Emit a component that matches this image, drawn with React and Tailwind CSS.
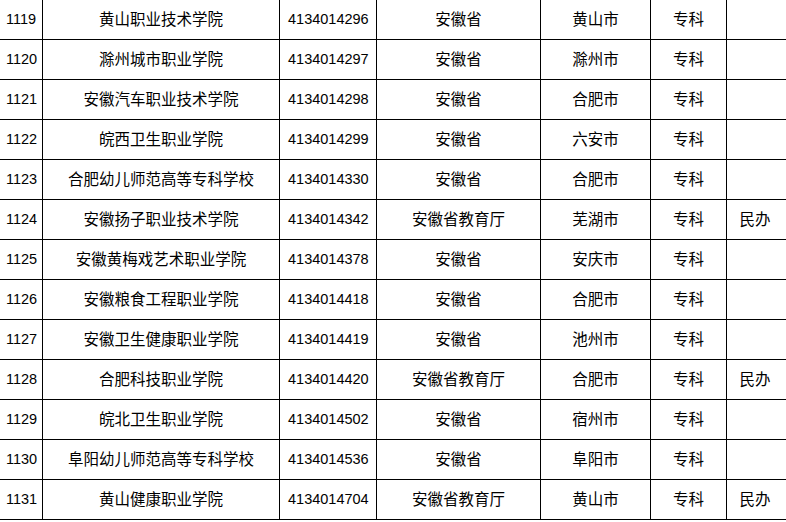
const rows = [
  ['1119', '黄山职业技术学院', '4134014296', '安徽省', '黄山市', '专科', ''],
  ['1120', '滁州城市职业学院', '4134014297', '安徽省', '滁州市', '专科', ''],
  ['1121', '安徽汽车职业技术学院', '4134014298', '安徽省', '合肥市', '专科', ''],
  ['1122', '皖西卫生职业学院', '4134014299', '安徽省', '六安市', '专科', ''],
  ['1123', '合肥幼儿师范高等专科学校', '4134014330', '安徽省', '合肥市', '专科', ''],
  ['1124', '安徽扬子职业技术学院', '4134014342', '安徽省教育厅', '芜湖市', '专科', '民办'],
  ['1125', '安徽黄梅戏艺术职业学院', '4134014378', '安徽省', '安庆市', '专科', ''],
  ['1126', '安徽粮食工程职业学院', '4134014418', '安徽省', '合肥市', '专科', ''],
  ['1127', '安徽卫生健康职业学院', '4134014419', '安徽省', '池州市', '专科', ''],
  ['1128', '合肥科技职业学院', '4134014420', '安徽省教育厅', '合肥市', '专科', '民办'],
  ['1129', '皖北卫生职业学院', '4134014502', '安徽省', '宿州市', '专科', ''],
  ['1130', '阜阳幼儿师范高等专科学校', '4134014536', '安徽省', '阜阳市', '专科', ''],
  ['1131', '黄山健康职业学院', '4134014704', '安徽省教育厅', '黄山市', '专科', '民办'],
];

// column cells: width includes the 1px right border
function Row({ r }) {
  return (
    <div className="flex h-10 border-b border-black">
      <div className="w-[43px] flex items-center pl-[6px] text-[14.5px] border-r border-black">{r[0]}</div>
      <div className="w-[237px] flex items-center justify-center border-r border-black">{r[1]}</div>
      <div className="w-[97px] flex items-center pl-[8px] text-[14.5px] border-r border-black">{r[2]}</div>
      <div className="w-[164px] flex items-center justify-center border-r border-black">{r[3]}</div>
      <div className="w-[110px] flex items-center justify-center border-r border-black">{r[4]}</div>
      <div className="w-[76px] flex items-center justify-center border-r border-black">{r[5]}</div>
      <div className="flex-1 flex items-center justify-center pr-[3px]">{r[6]}</div>
    </div>
  );
}

export default function App() {
  return (
    <div
      className="w-[786px] h-[522px] bg-white text-black text-[15.5px] leading-none overflow-hidden"
      style={{ fontFamily: '"Liberation Sans", "Noto Sans CJK SC", sans-serif' }}
    >
      {rows.map((r) => (
        <Row key={r[0]} r={r} />
      ))}
    </div>
  );
}
